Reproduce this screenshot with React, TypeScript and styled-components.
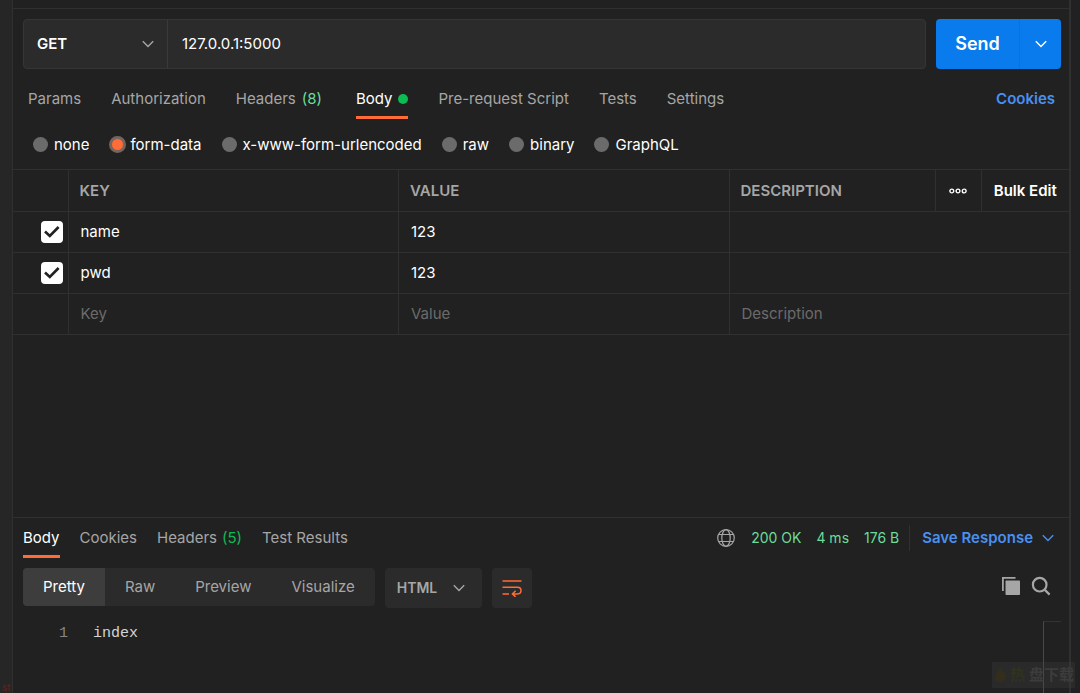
import React from "react";
import styled, { createGlobalStyle } from "styled-components";

const c = {
  bg: "#212121",
  rail: "#262626",
  field: "#2b2b2b",
  line: "#303030",
  text: "#ffffff",
  muted: "#a6a6a6",
  dim: "#6b6b6b",
  orange: "#ff6c37",
  green: "#0cbb52",
  lime: "#6bdd9a",
  blue: "#097bed",
  link: "#4a90f0",
};

const GlobalStyle = createGlobalStyle`
  * { box-sizing: border-box; }
  body { margin: 0; background: ${c.bg}; }
  body, button, input, select {
    font-family: Inter, "Liberation Sans", "Noto Sans CJK SC", sans-serif;
    font-size: 15px;
    line-height: 20px;
    color: ${c.text};
  }
  button, input, select { border: 0; background: none; padding: 0; margin: 0; outline: 0; }
  button { cursor: pointer; }
  svg { display: block; flex: none; }
`;

const Page = styled.div`
  display: flex;
  min-height: 100vh;
`;

const LeftRail = styled.aside`
  position: relative;
  flex: none;
  width: 13px;
  background: ${c.rail};
  border-right: 1px solid ${c.line};
`;

const RailMark = styled.span`
  position: absolute;
  left: 2px;
  bottom: 0;
  font-size: 10px;
  line-height: 12px;
  color: #6a1f1f;
`;

const RightRail = styled.aside`
  flex: none;
  width: 11px;
  border-left: 2px solid ${c.line};
`;

const Workspace = styled.main`
  flex: 1;
  min-width: 0;
  display: flex;
  flex-direction: column;
`;

const TopStrip = styled.div`
  height: 9px;
  border-bottom: 1px solid ${c.line};
`;

const RequestBar = styled.form`
  display: flex;
  gap: 10px;
  padding: 10px 8px 0 10px;
`;

const UrlGroup = styled.div`
  flex: 1;
  display: flex;
  height: 50px;
  background: ${c.field};
  border: 1px solid #363636;
  border-radius: 4px;
`;

const SelectBox = styled.div<{ $width: number }>`
  display: grid;
  align-items: center;
  width: ${(p) => p.$width}px;
  > * { grid-area: 1 / 1; }
  > svg { justify-self: end; margin-right: 12px; pointer-events: none; }
`;

const MethodBox = styled(SelectBox)`
  border-right: 1px solid #3a3a3a;
`;

const Select = styled.select<{ $color: string; $pad: number }>`
  appearance: none;
  width: 100%;
  height: 100%;
  padding-left: ${(p) => p.$pad}px;
  font-weight: 600;
  color: ${(p) => p.$color};
`;

const UrlInput = styled.input`
  flex: 1;
  min-width: 0;
  padding: 0 14px;
`;

const SendGroup = styled.div`
  display: flex;
  height: 50px;
  background: ${c.blue};
  border-radius: 4px;
`;

const SendButton = styled.button`
  width: 84px;
  font-size: 18px;
  font-weight: 600;
  border-right: 1px solid #0a72da;
`;

const SendMenu = styled.button`
  display: grid;
  place-items: center;
  width: 41px;
`;

const RequestTabs = styled.nav`
  display: flex;
  gap: 30px;
  padding: 20px 14px 0 15px;
`;

const Tab = styled.button<{ $active?: boolean; $roomy?: boolean }>`
  display: flex;
  align-items: center;
  gap: 6px;
  height: 30px;
  padding-bottom: 7px;
  margin-right: ${(p) => (p.$roomy ? 4 : 0)}px;
  border-bottom: 3px solid ${(p) => (p.$active ? c.orange : "transparent")};
  color: ${(p) => (p.$active ? c.text : c.muted)};
  white-space: nowrap;
`;

const Count = styled.span<{ $color: string }>`
  color: ${(p) => p.$color};
`;

const Dot = styled.span`
  width: 10px;
  height: 10px;
  border-radius: 50%;
  background: ${c.green};
`;

const CookiesLink = styled.a`
  margin-left: auto;
  font-weight: 600;
  color: ${c.link};
  text-decoration: none;
`;

const BodyTypes = styled.fieldset`
  display: flex;
  gap: 20px;
  border: 0;
  margin: 0;
  padding: 15px 20px 14px;
`;

const RadioLabel = styled.label`
  display: flex;
  align-items: center;
  gap: 6px;
  height: 21px;
`;

const Radio = styled.input`
  appearance: none;
  width: 15px;
  height: 15px;
  border-radius: 50%;
  background: ${c.dim};
  &:checked {
    width: 17px;
    height: 17px;
    margin: 0 -2px 0 0;
    border: 3px solid #75655f;
    background: ${c.orange};
  }
`;

const Table = styled.table`
  width: 100%;
  table-layout: fixed;
  border-collapse: collapse;
  border-bottom: 1px solid ${c.line};
`;

const Col = styled.col<{ $width?: number }>`
  width: ${(p) => (p.$width ? `${p.$width}px` : "auto")};
`;

const Row = styled.tr`
  height: 41px;
  border-top: 1px solid ${c.line};
`;

const Th = styled.th`
  height: 42px;
  padding: 0 11px;
  border-left: 1px solid ${c.line};
  text-align: left;
  font-weight: 600;
  color: ${c.muted};
  &:first-child { border-left: 0; }
`;

const ActionTh = styled(Th)`
  padding: 0;
  text-align: center;
`;

const HeadButton = styled.button`
  display: grid;
  place-items: center;
  width: 100%;
  font-weight: 600;
`;

const Td = styled.td`
  padding: 0 12px;
  border-left: 1px solid ${c.line};
  &:first-child { border-left: 0; padding: 0 5px 0 0; }
`;

const CellInput = styled.input`
  display: block;
  width: 100%;
  &::placeholder { color: ${c.dim}; opacity: 1; }
`;

const CheckBox = styled.label`
  display: grid;
  width: 22px;
  height: 22px;
  margin-left: auto;
  place-items: center;
  > * { grid-area: 1 / 1; }
  > svg { pointer-events: none; }
`;

const Check = styled.input`
  appearance: none;
  width: 22px;
  height: 22px;
  border-radius: 4px;
  background: #ffffff;
`;

const Response = styled.section`
  position: relative;
  margin-top: auto;
  min-height: 176px;
  border-top: 1px solid ${c.line};
`;

const ResponseHead = styled.div`
  display: flex;
  align-items: flex-start;
  gap: 20px;
  padding: 10px 14px 0 10px;
`;

const ResponseTab = styled(Tab)`
  gap: 5px;
`;

const Status = styled.div`
  display: flex;
  align-items: center;
  gap: 15px;
  height: 20px;
  margin-left: auto;
  font-size: 14px;
  color: ${c.lime};
  white-space: nowrap;
`;

const SaveButton = styled.button`
  display: flex;
  align-items: center;
  gap: 8px;
  height: 26px;
  margin-left: -5px;
  padding-left: 12px;
  border-left: 1px solid ${c.line};
  font-weight: 600;
  color: ${c.link};
`;

const Toolbar = styled.div`
  display: flex;
  align-items: flex-start;
  gap: 10px;
  padding: 10px 18px 0 10px;
`;

const Segments = styled.div`
  display: flex;
  height: 38px;
  background: ${c.field};
  border-radius: 4px;
  overflow: hidden;
`;

const Segment = styled.button<{ $active?: boolean }>`
  padding: 0 20px;
  background: ${(p) => (p.$active ? "#3d3d3d" : "transparent")};
  color: ${(p) => (p.$active ? c.text : c.muted)};
`;

const FormatBox = styled(SelectBox)`
  height: 40px;
  background: ${c.field};
  border-radius: 4px;
  > svg { margin-right: 16px; }
  > select { font-size: 14px; }
`;

const WrapButton = styled.button`
  display: grid;
  place-items: center;
  width: 40px;
  height: 40px;
  background: ${c.field};
  border-radius: 4px;
`;

const ViewActions = styled.div`
  display: flex;
  align-items: center;
  gap: 10px;
  height: 36px;
  margin-left: auto;
`;

const Code = styled.div`
  display: flex;
  gap: 25px;
  padding: 16px 0 0 46px;
  font-family: "Liberation Mono", monospace;
  color: #d4d4d4;
`;

const LineNumber = styled.span`
  color: #858585;
`;

const Minimap = styled.div`
  position: absolute;
  right: 8px;
  bottom: 0;
  width: 18px;
  height: 72px;
  border-top: 1px solid #333333;
  border-left: 1px solid #484848;
`;

const Watermark = styled.div`
  position: absolute;
  right: -6px;
  bottom: 5px;
  display: flex;
  align-items: center;
  gap: 2px;
  width: 83px;
  height: 26px;
  padding-left: 2px;
  background: rgba(70, 70, 70, 0.28);
  font-size: 15px;
  font-weight: 700;
  color: #3c3c3c;
  white-space: nowrap;
  overflow: hidden;
`;

const WatermarkLead = styled.span`
  margin-right: 2px;
  color: #2f331f;
`;

const Chevron = ({ color }: { color: string }) => (
  <svg width="14" height="14" viewBox="0 0 14 14" fill="none" stroke={color} strokeWidth="1.4">
    <path d="M1.8 4.3 7 9.5l5.2-5.2" />
  </svg>
);

const Tick = () => (
  <svg width="22" height="22" viewBox="0 0 22 22" fill="none" stroke="#212121" strokeWidth="2.6">
    <path d="M4 10.5 8.8 15 17.6 6" />
  </svg>
);

const Dots = () => (
  <svg width="18" height="6" viewBox="0 0 18 6" fill="none" stroke="#fff" strokeWidth="1.4">
    <circle cx="2.8" cy="3" r="1.9" />
    <circle cx="9" cy="3" r="1.9" />
    <circle cx="15.2" cy="3" r="1.9" />
  </svg>
);

const Globe = () => (
  <svg width="20" height="20" viewBox="0 0 20 20" fill="none" stroke={c.muted} strokeWidth="1.2">
    <circle cx="10" cy="10" r="8.3" />
    <ellipse cx="10" cy="10" rx="4.2" ry="8.3" />
    <path d="M2.500 6.500h15M2.500 13.500h15" />
  </svg>
);

const WrapIcon = () => (
  <svg width="20" height="18" viewBox="0 0 20 18" fill="none" stroke={c.orange} strokeWidth="1.5">
    <path d="M.5 2h19M.5 8.300h15.200a3.300 3.300 0 0 1 0 6.600H11M.5 14.900h6.500M13.600 11.700l-3.200 3.200 3.200 3" />
  </svg>
);

const CopyIcon = () => (
  <svg width="20" height="20" viewBox="0 0 20 20" fill={c.muted}>
    <path d="M1 1h13.500v1.800H2.800V15H1z" />
    <rect x="4.500" y="4.500" width="14.500" height="14.500" rx=".8" />
  </svg>
);

const SearchIcon = () => (
  <svg width="20" height="20" viewBox="0 0 20 20" fill="none" stroke={c.muted} strokeWidth="2.200">
    <circle cx="8.700" cy="8.700" r="6.800" />
    <path d="m13.600 13.600 5 5" />
  </svg>
);

const bodyTypes = ["none", "form-data", "x-www-form-urlencoded", "raw", "binary", "GraphQL"];
const fields = [
  { key: "name", value: "123" },
  { key: "pwd", value: "123" },
];

export default function App() {
  return (
    <>
      <GlobalStyle />
      <Page>
        <LeftRail>
          <RailMark>st</RailMark>
        </LeftRail>
        <Workspace>
          <TopStrip />
          <RequestBar onSubmit={(e) => e.preventDefault()}>
            <UrlGroup>
              <MethodBox $width={144}>
                <Select aria-label="Method" $color={c.text} $pad={13}>
                  <option>GET</option>
                </Select>
                <Chevron color={c.muted} />
              </MethodBox>
              <UrlInput aria-label="Request URL" defaultValue="127.0.0.1:5000" />
            </UrlGroup>
            <SendGroup>
              <SendButton type="submit">Send</SendButton>
              <SendMenu type="button" aria-label="Send options">
                <Chevron color="#fff" />
              </SendMenu>
            </SendGroup>
          </RequestBar>

          <RequestTabs>
            <Tab>Params</Tab>
            <Tab>Authorization</Tab>
            <Tab $roomy>
              Headers <Count $color={c.lime}>(8)</Count>
            </Tab>
            <Tab $active>
              Body <Dot />
            </Tab>
            <Tab>Pre-request Script</Tab>
            <Tab>Tests</Tab>
            <Tab>Settings</Tab>
            <CookiesLink href="#cookies">Cookies</CookiesLink>
          </RequestTabs>

          <BodyTypes aria-label="Body type">
            {bodyTypes.map((type) => (
              <RadioLabel key={type}>
                <Radio type="radio" name="body-type" defaultChecked={type === "form-data"} />
                {type}
              </RadioLabel>
            ))}
          </BodyTypes>

          <Table>
            <colgroup>
              <Col $width={55} />
              <Col />
              <Col />
              <Col $width={206} />
              <Col $width={46} />
              <Col $width={88} />
            </colgroup>
            <thead>
              <Row>
                <Th />
                <Th>KEY</Th>
                <Th>VALUE</Th>
                <Th>DESCRIPTION</Th>
                <ActionTh>
                  <HeadButton aria-label="More columns">
                    <Dots />
                  </HeadButton>
                </ActionTh>
                <ActionTh>
                  <HeadButton>Bulk Edit</HeadButton>
                </ActionTh>
              </Row>
            </thead>
            <tbody>
              {fields.map((f) => (
                <Row key={f.key}>
                  <Td>
                    <CheckBox>
                      <Check type="checkbox" aria-label={`Include ${f.key}`} defaultChecked />
                      <Tick />
                    </CheckBox>
                  </Td>
                  <Td>
                    <CellInput aria-label="Key" defaultValue={f.key} />
                  </Td>
                  <Td>
                    <CellInput aria-label="Value" defaultValue={f.value} />
                  </Td>
                  <Td colSpan={3}>
                    <CellInput aria-label="Description" />
                  </Td>
                </Row>
              ))}
              <Row>
                <Td />
                <Td>
                  <CellInput aria-label="New key" placeholder="Key" />
                </Td>
                <Td>
                  <CellInput aria-label="New value" placeholder="Value" />
                </Td>
                <Td colSpan={3}>
                  <CellInput aria-label="New description" placeholder="Description" />
                </Td>
              </Row>
            </tbody>
          </Table>

          <Response>
            <ResponseHead>
              <ResponseTab $active>Body</ResponseTab>
              <ResponseTab>Cookies</ResponseTab>
              <ResponseTab>
                Headers <Count $color={c.green}>(5)</Count>
              </ResponseTab>
              <ResponseTab>Test Results</ResponseTab>
              <Status>
                <Globe />
                <span>200 OK</span>
                <span>4 ms</span>
                <span>176 B</span>
                <SaveButton>
                  Save Response <Chevron color={c.link} />
                </SaveButton>
              </Status>
            </ResponseHead>
            <Toolbar>
              <Segments>
                <Segment $active>Pretty</Segment>
                <Segment>Raw</Segment>
                <Segment>Preview</Segment>
                <Segment>Visualize</Segment>
              </Segments>
              <FormatBox $width={97}>
                <Select aria-label="Format" $color={c.muted} $pad={12}>
                  <option>HTML</option>
                </Select>
                <Chevron color={c.muted} />
              </FormatBox>
              <WrapButton aria-label="Wrap lines">
                <WrapIcon />
              </WrapButton>
              <ViewActions>
                <button aria-label="Copy">
                  <CopyIcon />
                </button>
                <button aria-label="Search">
                  <SearchIcon />
                </button>
              </ViewActions>
            </Toolbar>
            <Code>
              <LineNumber>1</LineNumber>
              <span>index</span>
            </Code>
            <Minimap />
            <Watermark>
              <svg width="14" height="18" viewBox="0 0 14 18" fill="#332e1c">
                <path d="M6 1c1 4 6 5 6 10a6 6 0 0 1-11 2c-1-4 4-6 5-12z" />
              </svg>
              <WatermarkLead>热</WatermarkLead>盘下载
            </Watermark>
          </Response>
        </Workspace>
        <RightRail />
      </Page>
    </>
  );
}
